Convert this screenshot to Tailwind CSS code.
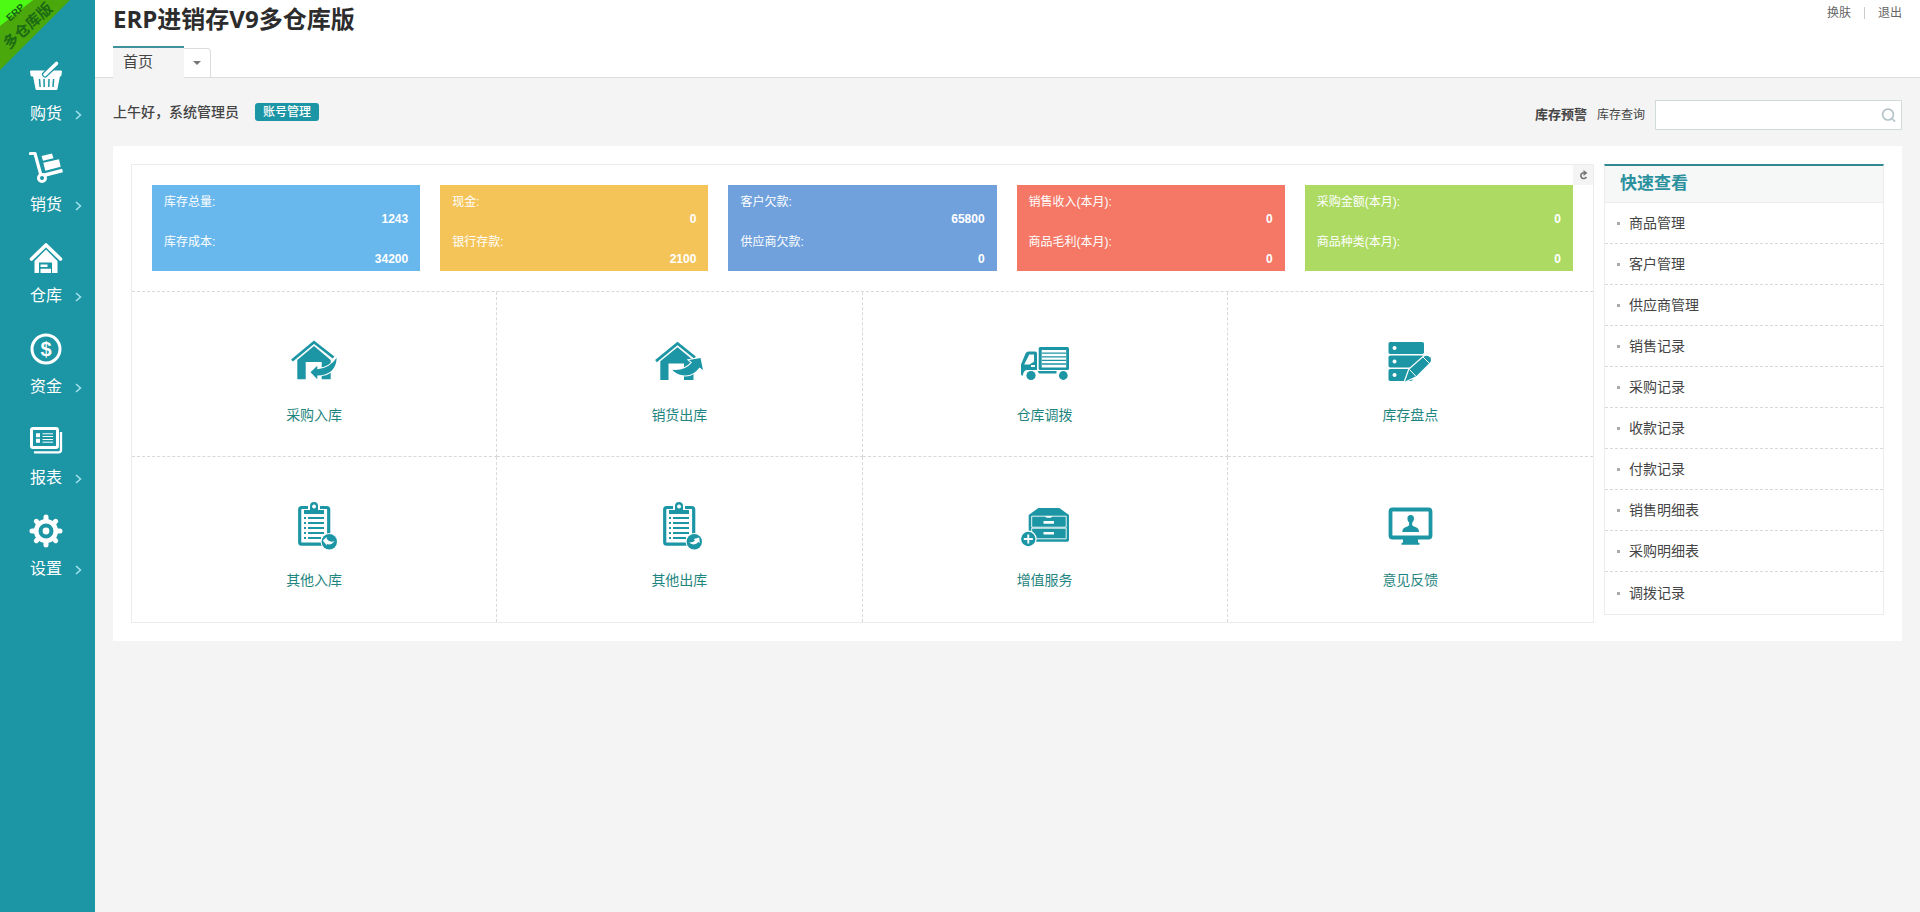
<!DOCTYPE html>
<html lang="zh-CN">
<head>
    <meta charset="UTF-8">
    <meta name="viewport" content="width=device-width, initial-scale=1.0">
    <title>ERP进销存V9多仓库版</title>
    <script src="https://cdn.jsdelivr.net/npm/@tailwindcss/browser@4"></script>
</head>
<body class="bg-[#f4f4f4] text-[#444] text-xs font-['Liberation_Sans','Noto_Sans_CJK_SC',sans-serif]">
    <div class="flex min-h-screen">

        <!-- Sidebar -->
        <aside class="relative w-[95px] shrink-0 bg-[#1c95a4] text-white">
            <!-- Edition ribbon -->
            <svg class="absolute top-0 left-0 w-[70px] h-[70px]" viewBox="0 0 70 70">
                <path d="M0 0h70L0 70z" fill="#4aa80c"/>
                <path d="M0 0h33L0 26z" fill="#4dfa14"/>
                <text x="15" y="16" transform="rotate(-42 15 12)" text-anchor="middle" font-size="10" font-weight="bold" fill="#146414">ERP</text>
                <text x="28" y="31" transform="rotate(-42 28 26)" text-anchor="middle" font-size="15" font-weight="bold" fill="#1c6a14">多仓库版</text>
            </svg>

            <nav class="flex flex-col gap-6 pt-[59px] pr-[3px]">
                <a href="#" class="flex flex-col items-center gap-[9px]">
                    <svg class="w-[34px] h-[34px]" viewBox="0 0 34 34" fill="#fff">
                        <path d="M2 11.500h30q1 0 1 1l-.6 4q-.2 1-1.400 1H3q-1.200 0-1.400-1L1 12.500q0-1 1-1z"/>
                        <path d="M4 17h27l-2.500 13q-.2 1-1.200 1H7.700q-1 0-1.200-1z"/>
                        <path d="M10.500 20l.6 8M15 20l.2 8M20 20l-.2 8M24.600 20l-.6 8" stroke="#1c95a4" stroke-width="1.500"/>
                        <path d="M27.500 4.500L16 15.500" stroke="#1c95a4" stroke-width="6" stroke-linecap="round"/>
                        <path d="M27.500 4.500L16 15.500" stroke="#fff" stroke-width="3.600" stroke-linecap="round"/>
                    </svg>
                    <span class="relative w-full text-center text-base leading-6">购货
                        <svg class="absolute right-[10px] top-2 w-[7px] h-[10px]" viewBox="0 0 7 10" fill="none" stroke="#a4e4ee" stroke-width="1.500"><path d="M1 1l4.500 4L1 9"/></svg>
                    </span>
                </a>
                <a href="#" class="flex flex-col items-center gap-[9px]">
                    <svg class="w-[34px] h-[34px]" viewBox="0 0 34 34" fill="#fff">
                        <path d="M1.500 3.500H6L12 25.500" fill="none" stroke="#fff" stroke-width="3.200" stroke-linecap="round" stroke-linejoin="round"/>
                        <path d="M14 25.500L33.500 20.500" stroke="#fff" stroke-width="3.400"/>
                        <path d="M12.500 6l10.500-2.500 1.500 4.800L14 10.700zM14.300 12.700L30 9.300l1.700 7.400-15.400 4z"/>
                        <circle cx="13" cy="28" r="3.500" fill="#1c95a4" stroke="#fff" stroke-width="3"/>
                    </svg>
                    <span class="relative w-full text-center text-base leading-6">销货
                        <svg class="absolute right-[10px] top-2 w-[7px] h-[10px]" viewBox="0 0 7 10" fill="none" stroke="#a4e4ee" stroke-width="1.500"><path d="M1 1l4.500 4L1 9"/></svg>
                    </span>
                </a>
                <a href="#" class="flex flex-col items-center gap-[9px]">
                    <svg class="w-[34px] h-[34px]" viewBox="0 0 34 34" fill="#fff">
                        <path d="M2.500 18L17 4 31.500 18" fill="none" stroke="#fff" stroke-width="3.600" stroke-linecap="round" stroke-linejoin="round"/>
                        <path d="M5.500 20L17 8.500 28.500 20v12h-23z"/>
                        <path d="M10 21.500h13V32H10z" fill="#1c95a4"/>
                        <path d="M11.500 23.500h7V26h-7zM11.500 27.700H22V32H11.500z"/>
                    </svg>
                    <span class="relative w-full text-center text-base leading-6">仓库
                        <svg class="absolute right-[10px] top-2 w-[7px] h-[10px]" viewBox="0 0 7 10" fill="none" stroke="#a4e4ee" stroke-width="1.500"><path d="M1 1l4.500 4L1 9"/></svg>
                    </span>
                </a>
                <a href="#" class="flex flex-col items-center gap-[9px]">
                    <svg class="w-[34px] h-[34px]" viewBox="0 0 34 34" fill="#fff">
                        <circle cx="17" cy="17" r="14" fill="none" stroke="#fff" stroke-width="3"/>
                        <text x="17" y="24" text-anchor="middle" font-size="20" font-weight="bold">$</text>
                    </svg>
                    <span class="relative w-full text-center text-base leading-6">资金
                        <svg class="absolute right-[10px] top-2 w-[7px] h-[10px]" viewBox="0 0 7 10" fill="none" stroke="#a4e4ee" stroke-width="1.500"><path d="M1 1l4.500 4L1 9"/></svg>
                    </span>
                </a>
                <a href="#" class="flex flex-col items-center gap-[9px]">
                    <svg class="w-[34px] h-[34px]" viewBox="0 0 34 34" fill="#fff">
                        <rect x="2.500" y="5.500" width="26" height="19" rx="1.500" fill="none" stroke="#fff" stroke-width="3"/>
                        <path d="M32 9v18q0 2.300-2.300 2.300H5" fill="none" stroke="#fff" stroke-width="2.300"/>
                        <path d="M7 10.300h4v4H7zM7 15.800h4v4H7z"/>
                        <path d="M13.500 10.800H24M13.500 13.500H24M13.500 16.500H24M13.500 19.200H24" stroke="#fff"/>
                    </svg>
                    <span class="relative w-full text-center text-base leading-6">报表
                        <svg class="absolute right-[10px] top-2 w-[7px] h-[10px]" viewBox="0 0 7 10" fill="none" stroke="#a4e4ee" stroke-width="1.500"><path d="M1 1l4.500 4L1 9"/></svg>
                    </span>
                </a>
                <a href="#" class="flex flex-col items-center gap-[9px]">
                    <svg class="w-[34px] h-[34px]" viewBox="0 0 34 34" fill="#fff">
                        <circle cx="17" cy="17" r="9.800" fill="none" stroke="#fff" stroke-width="4.600"/>
                        <path d="M17 6V3M17 28v3M6 17H3M28 17h3M9.200 9.200L7.300 7.300M24.800 9.200l1.900-1.900M9.200 24.800l-1.900 1.900M24.800 24.800l1.900 1.900" stroke="#fff" stroke-width="5" stroke-linecap="round"/>
                        <circle cx="17" cy="17" r="3.400"/>
                    </svg>
                    <span class="relative w-full text-center text-base leading-6">设置
                        <svg class="absolute right-[10px] top-2 w-[7px] h-[10px]" viewBox="0 0 7 10" fill="none" stroke="#a4e4ee" stroke-width="1.500"><path d="M1 1l4.500 4L1 9"/></svg>
                    </span>
                </a>
            </nav>
        </aside>

        <div class="flex-1 min-w-0">
            <!-- Header -->
            <header class="bg-white border-b border-[#dcdcdc] px-[18px]">
                <div class="flex justify-between items-start">
                    <h1 class="text-2xl leading-[38px] font-bold text-[#2c2c2c] font-['Open_Sans','Noto_Sans_CJK_SC',sans-serif]">ERP进销存V9多仓库版</h1>
                    <div class="flex items-center h-[26px] text-[#666]">
                        <a href="#">换肤</a>
                        <span class="w-px h-3 mx-[13px] bg-[#ccc]"></span>
                        <a href="#">退出</a>
                    </div>
                </div>
                <div class="flex items-end mt-2 -mb-px">
                    <button type="button" class="w-[71px] h-8 pl-[10px] pb-[2px] text-left text-[15px] leading-6 bg-[#f4f4f4] border-t-2 border-[#3f929c]">首页</button>
                    <button type="button" aria-label="更多标签" class="flex items-center justify-center w-[27px] h-[30px] border border-l-0 border-[#dcdcdc] rounded-tr-sm">
                        <svg class="w-2 h-1" viewBox="0 0 8 4" fill="#777"><path d="M0 0h8L4 4z"/></svg>
                    </button>
                </div>
            </header>

            <main class="px-[18px]">
                <!-- Greeting and search -->
                <div class="flex justify-between pt-[22px] pb-4">
                    <div class="flex items-center h-6">
                        <span class="text-sm leading-5 font-medium">上午好，系统管理员</span>
                        <a href="#" class="ml-4 px-2 leading-[18px] rounded-[3px] bg-[#1c95a4] text-white font-medium">账号管理</a>
                    </div>
                    <div class="flex items-center">
                        <a href="#" class="mr-[10px] text-[13px] font-bold">库存预警</a>
                        <label for="stockSearch" class="mr-[10px]">库存查询</label>
                        <div class="relative">
                            <input id="stockSearch" type="text" class="block w-[247px] h-[30px] px-2 pr-8 bg-white border border-[#d3dadc] focus:outline-none">
                            <button type="button" aria-label="查询" class="absolute right-[6px] top-2">
                                <svg class="w-[15px] h-[15px]" viewBox="0 0 16 16" fill="none" stroke="#b4c4c8" stroke-width="1.800"><circle cx="7.500" cy="7" r="5.800"/><path d="M11.500 11.200L15 14.500"/></svg>
                            </button>
                        </div>
                    </div>
                </div>

                <div class="flex items-start gap-[10px] p-[18px] bg-white">
                    <!-- Overview -->
                    <section class="relative flex-1 min-w-0 border border-[#ececec]">
                        <button type="button" aria-label="刷新" class="absolute top-0 right-0 w-5 h-5 flex items-center justify-center bg-[#f4f4f4]">
                            <svg class="w-[10px] h-[10px]" viewBox="0 0 10 10"><path d="M6.500 3H4.500a2.900 2.900 0 1 0 3.800 4" fill="none" stroke="#777" stroke-width="1.700"/><path d="M5.500 0L9.500 3l-4 3z" fill="#777"/></svg>
                        </button>

                        <div class="grid grid-cols-5 gap-5 p-5 border-b border-dashed border-[#d9d9d9] text-white leading-[17px]">
                            <dl class="px-3 pt-[9px] pb-[3px] bg-[#68b8ed]">
                                <dt>库存总量:</dt>
                                <dd class="text-right font-bold mb-[6px]">1243</dd>
                                <dt>库存成本:</dt>
                                <dd class="text-right font-bold">34200</dd>
                            </dl>
                            <dl class="px-3 pt-[9px] pb-[3px] bg-[#f4c459]">
                                <dt>现金:</dt>
                                <dd class="text-right font-bold mb-[6px]">0</dd>
                                <dt>银行存款:</dt>
                                <dd class="text-right font-bold">2100</dd>
                            </dl>
                            <dl class="px-3 pt-[9px] pb-[3px] bg-[#70a1dd]">
                                <dt>客户欠款:</dt>
                                <dd class="text-right font-bold mb-[6px]">65800</dd>
                                <dt>供应商欠款:</dt>
                                <dd class="text-right font-bold">0</dd>
                            </dl>
                            <dl class="px-3 pt-[9px] pb-[3px] bg-[#f57866]">
                                <dt>销售收入(本月):</dt>
                                <dd class="text-right font-bold mb-[6px]">0</dd>
                                <dt>商品毛利(本月):</dt>
                                <dd class="text-right font-bold">0</dd>
                            </dl>
                            <dl class="px-3 pt-[9px] pb-[3px] bg-[#acda63]">
                                <dt>采购金额(本月):</dt>
                                <dd class="text-right font-bold mb-[6px]">0</dd>
                                <dt>商品种类(本月):</dt>
                                <dd class="text-right font-bold">0</dd>
                            </dl>
                        </div>

                        <!-- Shortcuts -->
                        <div class="grid grid-cols-4 text-sm leading-5 text-[#1f8580]">
                            <a href="#" class="flex flex-col items-center gap-5 h-[165px] pt-[45px] border-r border-b border-dashed border-[#d9d9d9]">
                                <svg class="w-12 h-12" viewBox="0 0 48 48" fill="#1c95a4">
                                    <path d="M2 23.500L24 5.200 43.500 20.500" fill="none" stroke="#1c95a4" stroke-width="2.800"/>
                                    <path d="M7.300 23L24 9l16.700 14v19.300h-9V25H15.700v17.300H7.300z"/>
                                    <path d="M46.700 20.700Q46 38 27.300 38.500v3.800l-6.800-7 6.800-6.600v3.500Q40 31 46.700 20.700z" stroke="#fff" stroke-width="2" paint-order="stroke"/>
                                </svg>
                                采购入库
                            </a>
                            <a href="#" class="flex flex-col items-center gap-5 h-[165px] pt-[45px] border-r border-b border-dashed border-[#d9d9d9]">
                                <svg class="w-12 h-12" viewBox="0 0 48 48" fill="#1c95a4">
                                    <path d="M1 24.200L22.500 6.500 40 20.500" fill="none" stroke="#1c95a4" stroke-width="2.800"/>
                                    <path d="M5.300 24.200L22.500 10.200 38.500 23.500V43H29V26.500H13.500V43H5.300z"/>
                                    <path d="M17.300 32.800Q30 34 37 25.500L34 23l11.500-2 2.500 12-3.500-2.500Q37 41 25 37.700 19.500 36 17.300 32.800z" stroke="#fff" stroke-width="2" paint-order="stroke"/>
                                </svg>
                                销货出库
                            </a>
                            <a href="#" class="flex flex-col items-center gap-5 h-[165px] pt-[45px] border-r border-b border-dashed border-[#d9d9d9]">
                                <svg class="w-12 h-12" viewBox="0 0 48 48" fill="#1c95a4">
                                    <rect x="17.700" y="10" width="30.300" height="23" rx="1.500"/>
                                    <path d="M20.700 13h24.500v17.500H20.700z" fill="#fff"/>
                                    <path d="M21 16.200h24M21 19.800h24M21 23.400h24M21 27h24" stroke="#1c95a4" stroke-width="1.300"/>
                                    <path d="M7.500 14.500H14q2 0 2 2V33H5q-3 1.500-3 5.500H1.500Q0 38.500 0 37V27.500L4.500 16.500q1-2 3-2z"/>
                                    <path d="M8.300 17.500H13v7.300l-4.500 2.700H3.200zM10 28h4v2h-4z" fill="#fff"/>
                                    <circle cx="10" cy="38.500" r="4.600" stroke="#fff" stroke-width="2" paint-order="stroke"/>
                                    <circle cx="42.300" cy="38.500" r="4.400"/>
                                    <path d="M16.700 34h18.800v2.500H18z"/>
                                </svg>
                                仓库调拨
                            </a>
                            <a href="#" class="flex flex-col items-center gap-5 h-[165px] pt-[45px] border-b border-dashed border-[#d9d9d9]">
                                <svg class="w-12 h-12" viewBox="0 0 48 48" fill="#1c95a4">
                                    <rect x="2.500" y="5" width="35.500" height="12" rx="1.800"/>
                                    <rect x="2.500" y="18.500" width="35.500" height="12" rx="1.800"/>
                                    <rect x="2.500" y="32" width="24" height="12" rx="1.800"/>
                                    <path d="M8.500 9a2 2 0 1 0 .1 0zM8.500 22.500a2 2 0 1 0 .1 0zM8.500 36a2 2 0 1 0 .1 0z" fill="#fff"/>
                                    <path d="M19 44.500l4.300-12L38 19.500q3.500-2 6 .8 2 2.700 0 5.200L30.500 39z" stroke="#fff" stroke-width="2.400" paint-order="stroke"/>
                                    <path d="M23.500 32.500l6.500 6.800M37 20l7 7" stroke="#fff"/>
                                </svg>
                                库存盘点
                            </a>
                            <a href="#" class="flex flex-col items-center gap-5 h-[165px] pt-[45px] border-r border-dashed border-[#d9d9d9]">
                                <svg class="w-12 h-12" viewBox="0 0 48 48" fill="#1c95a4">
                                    <rect x="9.700" y="5.500" width="29" height="36.700" rx="2" fill="none" stroke="#1c95a4" stroke-width="3.200"/>
                                    <path d="M18 3h12v6H18z" fill="#fff"/>
                                    <path d="M14 8h6V4a4 4 0 0 1 8 0v4h6v4H14zM24 2.600a2 2 0 1 0 .1 0z" fill-rule="evenodd"/>
                                    <path d="M18 16h16M18 21h16M18 26h16M18 31h16M18 36h13M14 16h2M14 21h2M14 26h2M14 31h2M14 36h2" stroke="#1c95a4" stroke-width="1.800"/>
                                    <circle cx="39.300" cy="39.700" r="7.700" stroke="#fff" stroke-width="2" paint-order="stroke"/>
                                    <path d="M32.800 38.500l4-3.500v2q3 4 8 2-3.500 4.500-8 3v1.500z" fill="#fff"/>
                                </svg>
                                其他入库
                            </a>
                            <a href="#" class="flex flex-col items-center gap-5 h-[165px] pt-[45px] border-r border-dashed border-[#d9d9d9]">
                                <svg class="w-12 h-12" viewBox="0 0 48 48" fill="#1c95a4">
                                    <rect x="9.700" y="5.500" width="29" height="36.700" rx="2" fill="none" stroke="#1c95a4" stroke-width="3.200"/>
                                    <path d="M18 3h12v6H18z" fill="#fff"/>
                                    <path d="M14 8h6V4a4 4 0 0 1 8 0v4h6v4H14zM24 2.600a2 2 0 1 0 .1 0z" fill-rule="evenodd"/>
                                    <path d="M18 16h16M18 21h16M18 26h16M18 31h16M18 36h13M14 16h2M14 21h2M14 26h2M14 31h2M14 36h2" stroke="#1c95a4" stroke-width="1.800"/>
                                    <circle cx="39.300" cy="39.700" r="7.700" stroke="#fff" stroke-width="2" paint-order="stroke"/>
                                    <path d="M34 40.500q4 .5 6-2.300L38.700 37l5.500-1.500.6 5.500-1.300-1q-4 4.500-9.500.5z" fill="#fff"/>
                                </svg>
                                其他出库
                            </a>
                            <a href="#" class="flex flex-col items-center gap-5 h-[165px] pt-[45px] border-r border-dashed border-[#d9d9d9]">
                                <svg class="w-12 h-12" viewBox="0 0 48 48" fill="#1c95a4">
                                    <path d="M7.700 13l9.600-7h21L48 13v25q0 1.700-1.700 1.700h-37q-1.600 0-1.600-1.700z"/>
                                    <path d="M10.700 14.200h34.500v11H10.700zM10.700 26.200h34.500v10.600H10.700z" fill="none" stroke="#fff" stroke-width=".9"/>
                                    <path d="M22.500 19H33v2.800H22.500zM22.500 30H33v2.500H22.500zM24 14h7.500l-1.500 1.800h-4.500z" fill="#fff"/>
                                    <circle cx="7.300" cy="37" r="7.200" stroke="#fff" stroke-width="2.400" paint-order="stroke"/>
                                    <path d="M7.300 32.500v9M2.800 37h9" stroke="#fff" stroke-width="1.900"/>
                                </svg>
                                增值服务
                            </a>
                            <a href="#" class="flex flex-col items-center gap-5 h-[165px] pt-[45px]">
                                <svg class="w-12 h-12" viewBox="0 0 48 48" fill="#1c95a4">
                                    <rect x="4.500" y="7.500" width="40" height="28" rx="2" fill="none" stroke="#1c95a4" stroke-width="3.800"/>
                                    <path d="M17 36h15v4.500l1.500.5v1.700h-18V41l1.500-.5z"/>
                                    <path d="M24.700 13q3.300 0 3.300 3.500 0 2.500-1.800 4v2.700q1.300 1.300 4.300 2.300 2.500 1 2.500 4.500H16.300q0-3.500 2.500-4.500 3-1 4.300-2.300v-2.700q-1.700-1.500-1.700-4 0-3.500 3.300-3.500z"/>
                                </svg>
                                意见反馈
                            </a>
                        </div>
                    </section>

                    <!-- Quick view -->
                    <section class="w-[280px] shrink-0 border border-t-2 border-[#ececec] border-t-[#338892]">
                        <h2 class="pl-[15px] h-[37px] leading-9 border-b border-[#ececec] bg-[#f6f7f7] text-[17px] font-bold text-[#2b919e]">快速查看</h2>
                        <ul class="text-sm leading-10 divide-y divide-dashed divide-[#d9d9d9]">
                            <li><a href="#" class="flex items-center gap-[9px] pl-3 before:w-[3px] before:h-[3px] before:bg-[#aaa]">商品管理</a></li>
                            <li><a href="#" class="flex items-center gap-[9px] pl-3 before:w-[3px] before:h-[3px] before:bg-[#aaa]">客户管理</a></li>
                            <li><a href="#" class="flex items-center gap-[9px] pl-3 before:w-[3px] before:h-[3px] before:bg-[#aaa]">供应商管理</a></li>
                            <li><a href="#" class="flex items-center gap-[9px] pl-3 before:w-[3px] before:h-[3px] before:bg-[#aaa]">销售记录</a></li>
                            <li><a href="#" class="flex items-center gap-[9px] pl-3 before:w-[3px] before:h-[3px] before:bg-[#aaa]">采购记录</a></li>
                            <li><a href="#" class="flex items-center gap-[9px] pl-3 before:w-[3px] before:h-[3px] before:bg-[#aaa]">收款记录</a></li>
                            <li><a href="#" class="flex items-center gap-[9px] pl-3 before:w-[3px] before:h-[3px] before:bg-[#aaa]">付款记录</a></li>
                            <li><a href="#" class="flex items-center gap-[9px] pl-3 before:w-[3px] before:h-[3px] before:bg-[#aaa]">销售明细表</a></li>
                            <li><a href="#" class="flex items-center gap-[9px] pl-3 before:w-[3px] before:h-[3px] before:bg-[#aaa]">采购明细表</a></li>
                            <li class="py-px"><a href="#" class="flex items-center gap-[9px] pl-3 before:w-[3px] before:h-[3px] before:bg-[#aaa]">调拨记录</a></li>
                        </ul>
                    </section>
                </div>
            </main>
        </div>
    </div>
</body>
</html>
